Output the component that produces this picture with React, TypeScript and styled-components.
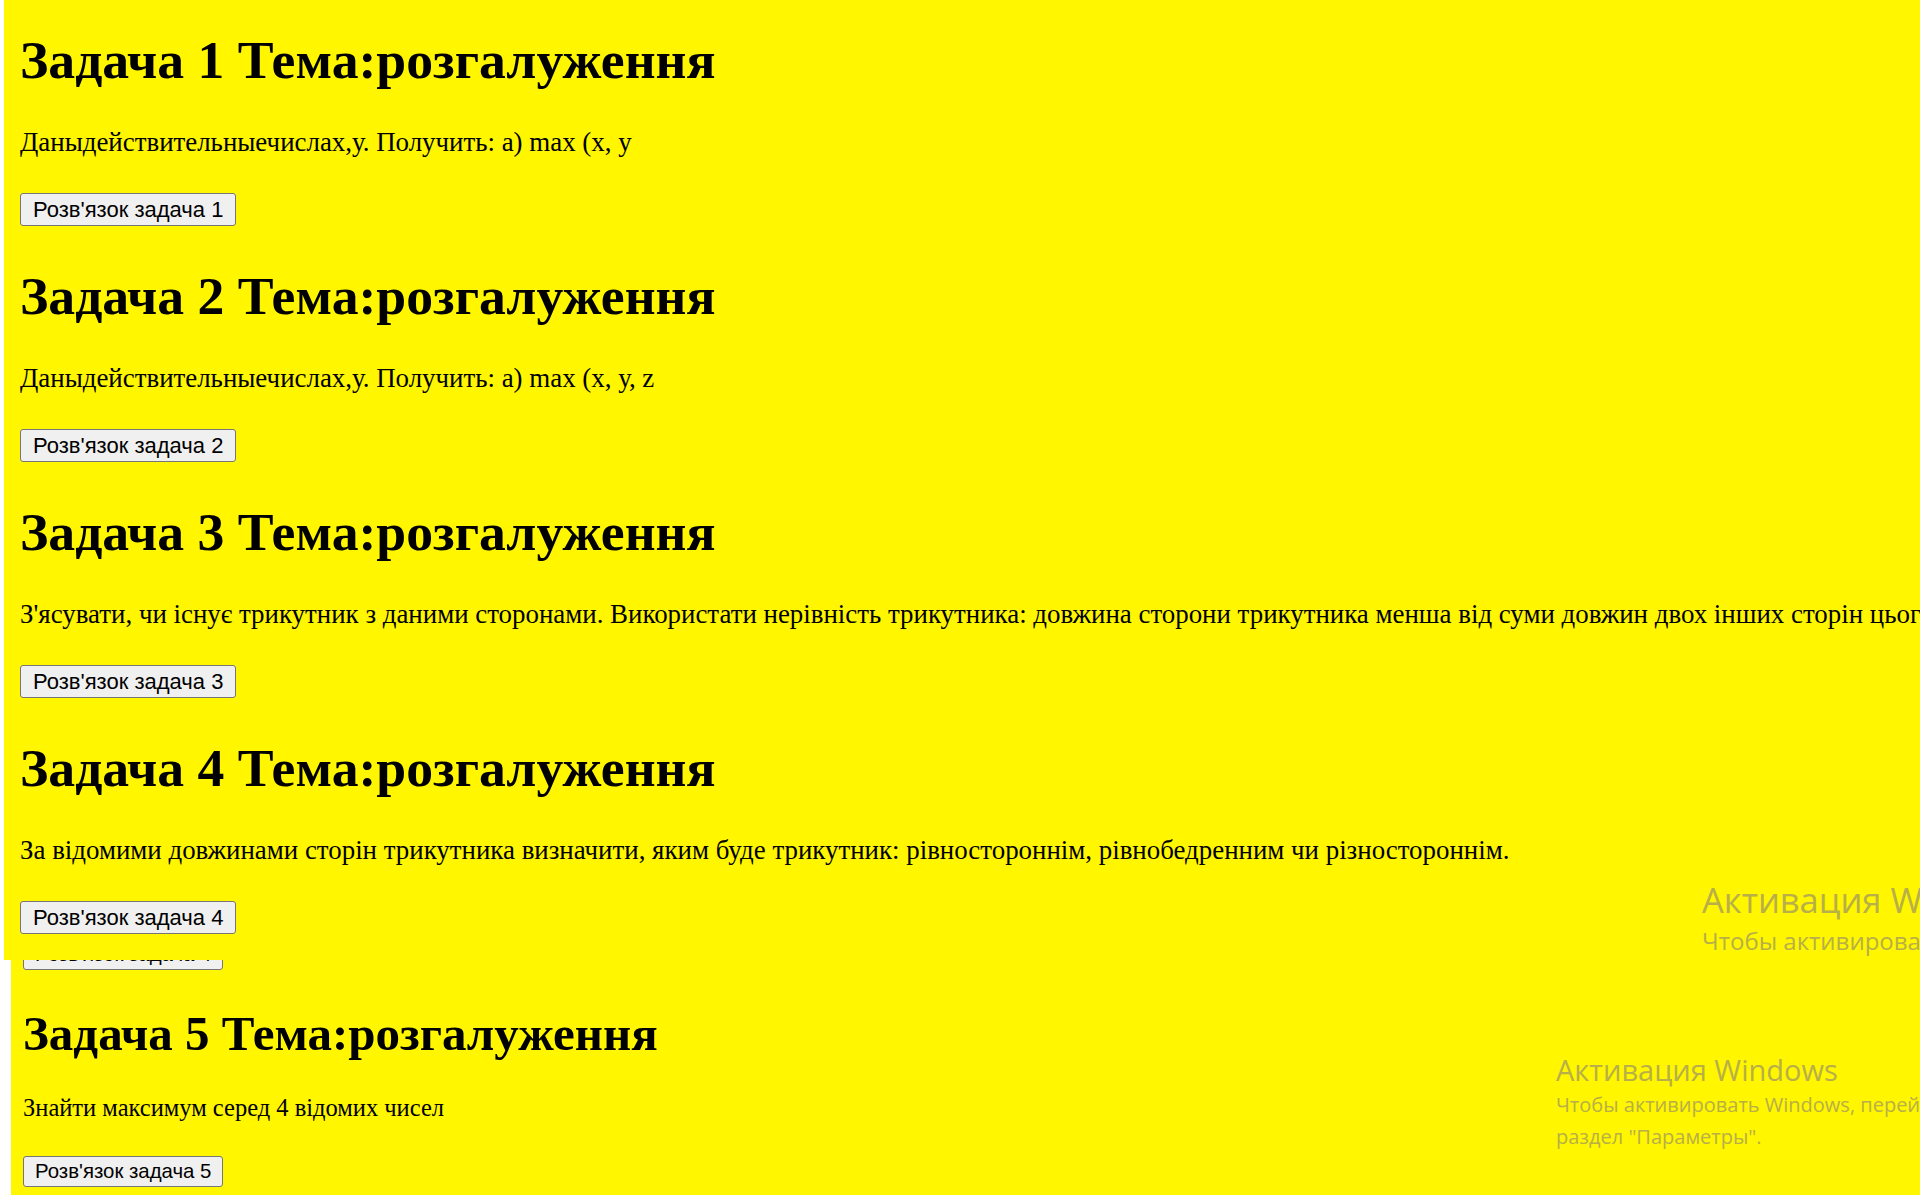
import React from "react";
import styled, { createGlobalStyle } from "styled-components";

const GlobalStyle = createGlobalStyle`
  html, body {
    margin: 0;
    padding: 0;
    background: #ffffff;
    width: 1920px;
    height: 1195px;
    overflow: hidden;
  }
`;

const YELLOW = "#fff600";

const Page = styled.div`
  width: 1920px;
  height: 1195px;
  display: flex;
  flex-direction: column;
  background: #ffffff;
  overflow: hidden;
`;

const Shot = styled.div<{ $inset: number; $height: number; $padTop: number; $padLeft: number }>`
  position: relative;
  margin-left: ${(p) => p.$inset}px;
  height: ${(p) => p.$height}px;
  padding-top: ${(p) => p.$padTop}px;
  padding-left: ${(p) => p.$padLeft - p.$inset}px;
  box-sizing: border-box;
  background: ${YELLOW};
  overflow: hidden;
  flex-shrink: 0;
`;

const Task = styled.section<{ $big: boolean }>`
  display: flex;
  flex-direction: column;
  align-items: flex-start;
  margin-bottom: ${(p) => (p.$big ? 38 : 0)}px;
`;

const Heading = styled.h1<{ $big: boolean }>`
  margin: 0;
  font-family: "Liberation Serif", "Times New Roman", serif;
  font-weight: 700;
  font-size: ${(p) => (p.$big ? 53.7 : 49)}px;
  line-height: ${(p) => (p.$big ? 64 : 58)}px;
  color: #000;
  white-space: nowrap;
`;

const Text = styled.p<{ $big: boolean }>`
  margin: ${(p) => (p.$big ? "34px 0 35px" : "30px 0 34px")};
  font-family: "Liberation Serif", "Times New Roman", serif;
  font-size: ${(p) => (p.$big ? 26.9 : 24.5)}px;
  line-height: ${(p) => (p.$big ? 32 : 29)}px;
  color: #000;
  white-space: nowrap;
`;

const SolveButton = styled.button<{ $big: boolean }>`
  height: ${(p) => (p.$big ? 33 : 31)}px;
  padding: 0 ${(p) => (p.$big ? 12 : 11)}px;
  font-family: "Liberation Sans", Arial, sans-serif;
  font-size: ${(p) => (p.$big ? 22 : 20.4)}px;
  line-height: 1;
  color: #000;
  background: #f0f0f0;
  border: 1px solid #767676;
  border-radius: 3px;
  white-space: nowrap;
  cursor: pointer;
`;

const ClippedButton = styled(SolveButton)`
  margin-top: -21px;
  margin-bottom: 35px;
  align-self: flex-start;
`;

const Watermark = styled.div<{ $left: number; $top: number; $title: number; $sub: number }>`
  position: absolute;
  left: ${(p) => p.$left}px;
  top: ${(p) => p.$top}px;
  font-family: "Open Sans", "Noto Sans", sans-serif;
  color: #b8af48;
  white-space: nowrap;
  pointer-events: none;

  & > div:first-child {
    font-size: ${(p) => p.$title}px;
    line-height: ${(p) => Math.round(p.$title * 1.3)}px;
  }
  & > div + div {
    font-size: ${(p) => p.$sub}px;
    line-height: ${(p) => Math.round(p.$sub * 1.6)}px;
  }
`;

const topTasks = [
  { n: 1, text: "Даныдействительныечислах,у. Получить: а) max (х, у" },
  { n: 2, text: "Даныдействительныечислах,у. Получить: а) max (х, у, z" },
  {
    n: 3,
    text:
      "З'ясувати, чи існує трикутник з даними сторонами. Використати нерівність трикутника: довжина сторони трикутника менша від суми довжин двох інших сторін цього трикутника.",
  },
  {
    n: 4,
    text:
      "За відомими довжинами сторін трикутника визначити, яким буде трикутник: рівностороннім, рівнобедренним чи різностороннім.",
  },
];

export default function App() {
  return (
    <Page>
      <GlobalStyle />
      <Shot $inset={4} $height={960} $padTop={28} $padLeft={20}>
        {topTasks.map((t) => (
          <Task key={t.n} $big>
            <Heading $big>Задача {t.n} Тема:розгалуження</Heading>
            <Text $big>{t.text}</Text>
            <SolveButton $big>Розв'язок задача {t.n}</SolveButton>
          </Task>
        ))}
        <Watermark $left={1698} $top={877} $title={34.5} $sub={24}>
          <div>Активация Windows</div>
          <div>Чтобы активировать Windows, перейдите в</div>
        </Watermark>
      </Shot>
      <Shot $inset={11} $height={235} $padTop={0} $padLeft={23}>
        <Task $big={false}>
          <ClippedButton $big={false}>Розв'язок задача 4</ClippedButton>
          <Heading $big={false}>Задача 5 Тема:розгалуження</Heading>
          <Text $big={false}>Знайти максимум серед 4 відомих чисел</Text>
          <SolveButton $big={false}>Розв'язок задача 5</SolveButton>
        </Task>
        <Watermark $left={1545} $top={91} $title={29} $sub={20}>
          <div>Активация Windows</div>
          <div>Чтобы активировать Windows, перейдите в</div>
          <div>раздел "Параметры".</div>
        </Watermark>
      </Shot>
    </Page>
  );
}
